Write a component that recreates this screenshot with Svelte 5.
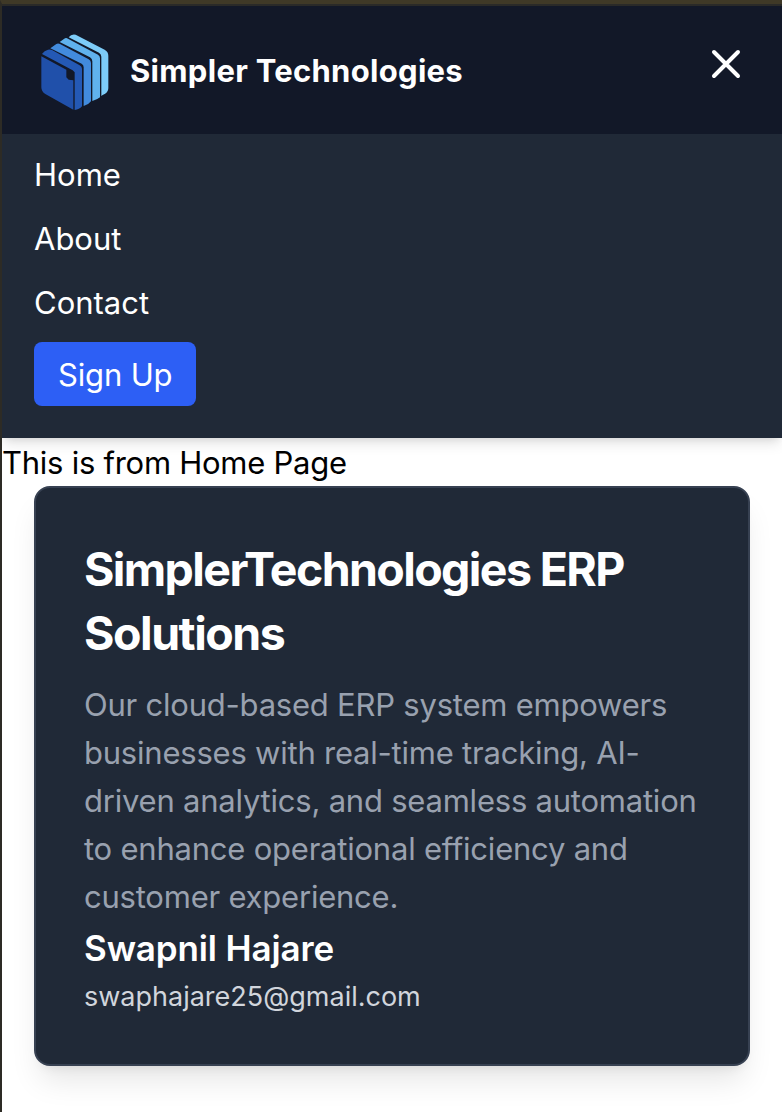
<script>
  const links = ['Home', 'About', 'Contact'];
  const summary = [
    'Our cloud-based ERP system empowers',
    'businesses with real-time tracking, AI-',
    'driven analytics, and seamless automation',
    'to enhance operational efficiency and',
    'customer experience.'
  ];
</script>

<div class="page">
  <header>
    <nav>
      <div class="brand">
        <svg width="80" height="80" viewBox="12 15 240 240" aria-hidden="true">
          <path fill="#7dccf8" d="M116 37Q124 26 137 29L224 74Q235 80 235 92V190Q235 204 218 210L214 213V95Q214 87 207 83Z"/>
          <path fill="#60b2ed" d="M89 51L105 40Q109 38 114 41L204 89Q210 93 210 100V217Q202 224 187 228V109Q187 101 180 97Z"/>
          <path fill="#428bdd" d="M61 70L79 57Q84 54 90 57L176 103Q183 107 183 114V229Q176 239 161 243V127Q161 119 155 116Z"/>
          <path fill="#2459b5" d="M36 87Q43 76 54 74Q60 72 66 75L149 121Q156 125 156 131V244Q148 254 134 255V142L128 136Z"/>
          <path fill="#2050aa" d="M34 94L109 134V157L116 164L130 166V254L46 207Q34 200 34 187Z"/>
        </svg>
        <span class="name">Simpler Technologies</span>
      </div>
      <button class="close" aria-label="Close menu">
        <svg width="48" height="48" viewBox="0 0 24 24" fill="none" stroke="#fff" stroke-width="2" stroke-linecap="round"><path d="M6 18L18 6M6 6l12 12"/></svg>
      </button>
    </nav>
    <div class="menu">
      {#each links as link}<span>{link}</span>{/each}
      <span class="signup">Sign Up</span>
    </div>
  </header>
  <main>
    <p class="intro">This is from Home Page</p>
    <article>
      <h2>SimplerTechnologies ERP<br /><span class="second">Solutions</span></h2>
      <p class="summary">
        {#each summary as line}{line}<br />{/each}
      </p>
      <h3>Swapnil Hajare</h3>
      <p class="email">swaphajare25@gmail.com</p>
    </article>
  </main>
</div>

<style>
  :global(body) { margin: 0; background: #fff; }
  .page {
    box-sizing: border-box; height: 1112px; overflow: hidden;
    border-top: 4px solid #3f3927; border-left: 2px solid #2d2b25;
    font: 400 31px/48px Inter, sans-serif; color: #000;
    white-space: nowrap;
  }
  p, h2, h3 { margin: 0; }
  header {
    border-top: 2px solid #2a2a28; color: #fff;
    box-shadow: 0 8px 12px -2px rgb(0 0 0 / .1), 0 4px 8px -4px rgb(0 0 0 / .1);
  }
  nav {
    height: 128px; box-sizing: border-box; padding: 0 32px; background: #121828;
    display: flex; align-items: center; justify-content: space-between;
  }
  .brand { display: flex; align-items: center; gap: 16px; font-weight: 700; }
  .name { padding-top: 2px; letter-spacing: .29px; }
  .close { border: 0; padding: 0; background: none; margin-bottom: 12px; height: 48px; }
  .close svg { display: block; }
  .menu {
    background: #202937; padding: 17px 32px 32px;
    display: flex; flex-direction: column; align-items: flex-start; gap: 16px;
  }
  .signup {
    background: #2d5ff5; border-radius: 8px; box-sizing: border-box;
    width: 162px; height: 64px; margin-top: -1px; padding: 9px 0 0 24px; letter-spacing: -.15px;
  }
  .intro { box-sizing: border-box; height: 48px; padding-top: 1px; letter-spacing: -.26px; }
  article {
    margin: 0 32px; box-sizing: border-box; height: 580px; padding: 49px 48px 48px;
    border: 2px solid #374152; border-radius: 16px; background: #202937;
    box-shadow: 0 20px 30px -6px rgb(0 0 0 / .1), 0 8px 12px -8px rgb(0 0 0 / .1);
  }
  h2 { font-size: 46.5px; line-height: 64px; color: #fff; margin-bottom: 16px; letter-spacing: -1.62px; }
  .second { letter-spacing: -1.48px; }
  .summary { color: #99a1af; letter-spacing: -.22px; }
  h3 { font-size: 35px; line-height: 54px; font-weight: 600; color: #fff; letter-spacing: -.12px; margin-bottom: 2px; }
  .email { font-size: 27px; line-height: 40px; color: #d1d5dc; }
</style>
